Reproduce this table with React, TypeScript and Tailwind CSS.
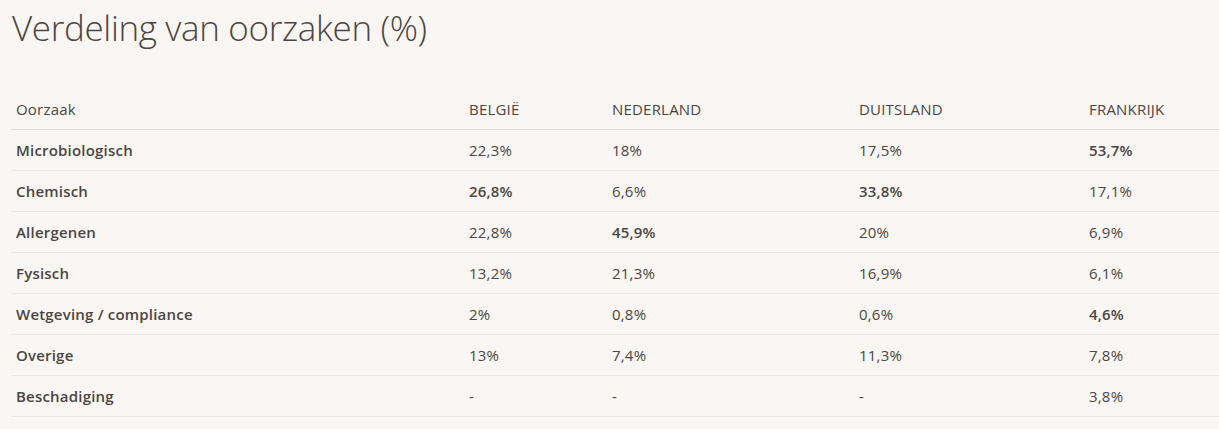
import React from 'react';

type Cell = { v: string; b?: boolean };

const rows: { name: string; cells: Cell[] }[] = [
  { name: 'Microbiologisch', cells: [{ v: '22,3%' }, { v: '18%' }, { v: '17,5%' }, { v: '53,7%', b: true }] },
  { name: 'Chemisch', cells: [{ v: '26,8%', b: true }, { v: '6,6%' }, { v: '33,8%', b: true }, { v: '17,1%' }] },
  { name: 'Allergenen', cells: [{ v: '22,8%' }, { v: '45,9%', b: true }, { v: '20%' }, { v: '6,9%' }] },
  { name: 'Fysisch', cells: [{ v: '13,2%' }, { v: '21,3%' }, { v: '16,9%' }, { v: '6,1%' }] },
  { name: 'Wetgeving / compliance', cells: [{ v: '2%' }, { v: '0,8%' }, { v: '0,6%' }, { v: '4,6%', b: true }] },
  { name: 'Overige', cells: [{ v: '13%' }, { v: '7,4%' }, { v: '11,3%' }, { v: '7,8%' }] },
  { name: 'Beschadiging', cells: [{ v: '-' }, { v: '-' }, { v: '-' }, { v: '3,8%' }] },
];

const cols = ['w-[453px]', 'w-[143px]', 'w-[247px]', 'w-[230px]', 'w-[135px]'];

export default function App() {
  return (
    <div className="min-h-[429px] bg-[#faf6f3] text-[#4a4644] font-['Open_Sans',sans-serif] pl-[11px] pt-[6px]">
      <h1 className="text-[35px] font-light leading-[44px] tracking-[-0.35px] pl-px">Verdeling van oorzaken (%)</h1>
      <table className="mt-[39px] border-collapse text-[15px] tracking-[0.2px] table-fixed">
        <thead>
          <tr className="h-[40px] border-b border-[#e3dfdb]">
            {['Oorzaak', 'BELGIË', 'NEDERLAND', 'DUITSLAND', 'FRANKRIJK'].map((h, i) => (
              <th key={h} className={`${cols[i]} text-left font-normal px-[5px] pt-px align-middle`}>
                {h}
              </th>
            ))}
          </tr>
        </thead>
        <tbody>
          {rows.map((r) => (
            <tr key={r.name} className="h-[41px] border-b border-[#ebe7e3]">
              <td className="px-[5px] pt-px font-semibold">{r.name}</td>
              {r.cells.map((c, i) => (
                <td key={i} className={`px-[5px] pt-px ${c.b ? 'font-semibold' : ''}`}>
                  {c.v}
                </td>
              ))}
            </tr>
          ))}
        </tbody>
      </table>
    </div>
  );
}
